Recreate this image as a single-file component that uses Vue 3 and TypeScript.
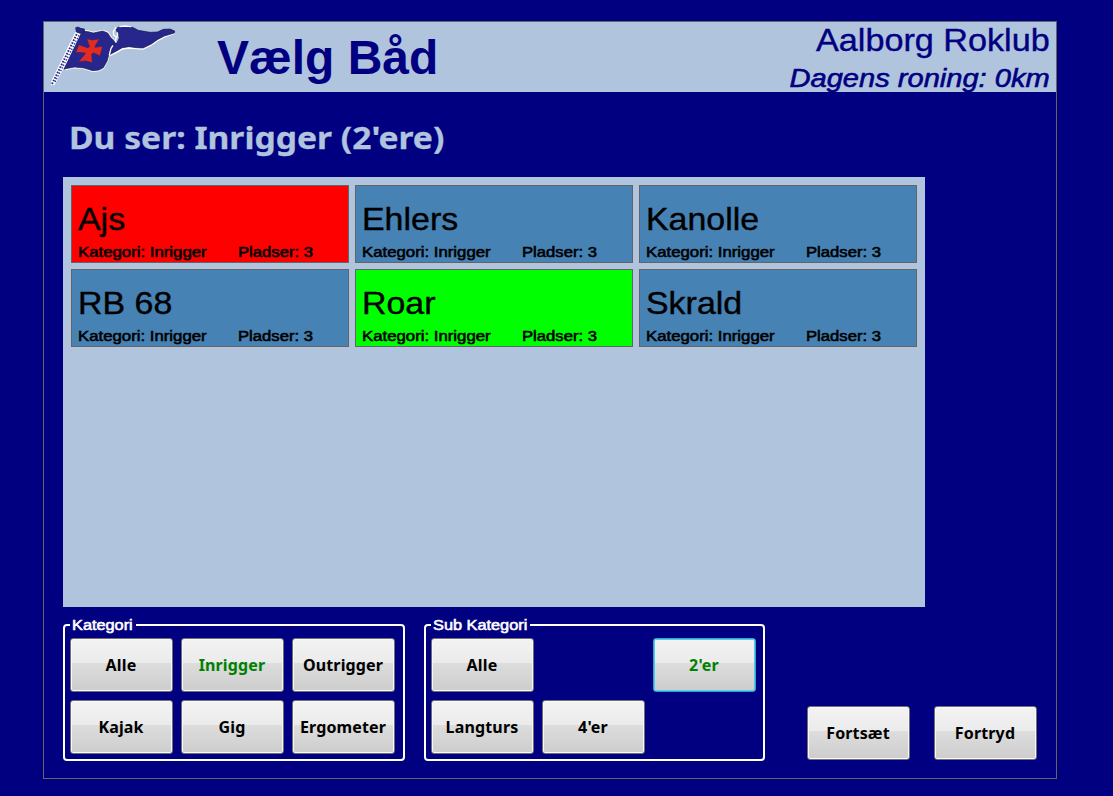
<script setup lang="ts">
interface Boat {
  name: string
  state: 'free' | 'damaged' | 'selected'
}

interface Choice {
  label: string
  active?: boolean
  focused?: boolean
}

const boats: Boat[] = [
  { name: 'Ajs', state: 'damaged' },
  { name: 'Ehlers', state: 'free' },
  { name: 'Kanolle', state: 'free' },
  { name: 'RB 68', state: 'free' },
  { name: 'Roar', state: 'selected' },
  { name: 'Skrald', state: 'free' },
]

const categories: Choice[] = [
  { label: 'Alle' },
  { label: 'Inrigger', active: true },
  { label: 'Outrigger' },
  { label: 'Kajak' },
  { label: 'Gig' },
  { label: 'Ergometer' },
]

// null leaves an empty cell in the grid
const subCategories: (Choice | null)[] = [
  { label: 'Alle' },
  null,
  { label: "2'er", active: true, focused: true },
  { label: 'Langturs' },
  { label: "4'er" },
]
</script>

<template>
  <div class="screen">
    <main class="frame">
      <header class="header">
        <svg class="logo" viewBox="12 21 423 210" aria-hidden="true">
          <path class="flag-edge" d="M124 56 L132 48 L145 49 L160 53 L188 47 L203 53 L213 68 L227 81 L222 98 L207 117 L201 139 L190 158 L177 166 L158 168 L132 160 L104 157 L76 163" />
          <path class="cloth" d="M120 58 L131 49 L145 50 L160 54 L188 48 L203 54 L213 69 L227 81 L222 98 L207 117 L201 139 L190 158 L177 165 L158 167 L132 159 L104 156 L72 162 Z" />
          <path d="M33 211 L33 200 L106 51 L122 56 L80 143 L44 209 Z" fill="#fff" />
          <path d="M36 207 L112 54" stroke="#2a2a90" stroke-width="6" stroke-dasharray="5 4" />
          <path d="M43 205 L119 57" stroke="#2a2a90" stroke-width="4" stroke-dasharray="4 5" stroke-dashoffset="4" />
          <path d="M107 38 L114 36 L122 40 L133 42 L134 50 L120 55 L109 51 Z" fill="#26268c" stroke="#181848" stroke-width="2" />
          <path class="flag-edge" d="M208 121 L228 112 L247 101 L267 98 L290 100 L309 101 L334 89 L352 76 L373 65 L403 54" />
          <path class="cloth" d="M228 43 L235 36 L252 34 L269 34 L282 39 L295 46 L330 52 L352 51 L370 43 L390 42 L404 48 L403 54 L373 63 L352 74 L334 87 L309 99 L290 98 L267 95 L247 98 L228 109 L209 119 L214 98 L234 77 L238 68 L232 53 Z" />
          <path d="M228 37 L220 50 L221 60 L229 67 L233 61 L232 52 M229 68 L225 77 L229 83 M208 120 L213 100 L219 91 M238 35 L255 33 L274 35" fill="none" stroke="#fff" stroke-width="4" />
          <path d="M140 71 L157 75 L179 71 L167 90 L165 97 L188 94 L180 123 L162 114 L155 117 L157 143 L137 138 L115 140 L133 120 L136 114 L107 112 L117 89 L142 98 L149 95 Z" fill="#e22c22" stroke="#40206c" stroke-width="2" />
        </svg>
        <h1 class="title">Vælg Båd</h1>
        <div class="club">
          <div class="club-name">Aalborg Roklub</div>
          <div class="club-day">Dagens roning: 0km</div>
        </div>
      </header>

      <h2 class="viewing">Du ser: Inrigger (2'ere)</h2>

      <section class="boats">
        <article v-for="boat in boats" :key="boat.name" class="boat" :class="boat.state">
          <div class="boat-name">{{ boat.name }}</div>
          <div class="boat-info">
            <div class="boat-category"><span class="wide">Kategori: Inrigger</span></div>
            <span class="wide">Pladser: 3</span>
          </div>
        </article>
      </section>

      <footer class="controls">
        <section class="group">
          <div class="legend first"><span class="wide">Kategori</span></div>
          <div class="buttons">
            <button v-for="c in categories" :key="c.label" class="btn" :class="{ active: c.active }">{{ c.label }}</button>
          </div>
        </section>

        <section class="group">
          <div class="legend second"><span class="wide">Sub Kategori</span></div>
          <div class="buttons">
            <template v-for="(c, i) in subCategories" :key="i">
              <button v-if="c" class="btn" :class="{ active: c.active, focused: c.focused }">{{ c.label }}</button>
              <span v-else></span>
            </template>
          </div>
        </section>

        <div class="actions">
          <button class="btn">Fortsæt</button>
          <button class="btn">Fortryd</button>
        </div>
      </footer>
    </main>
  </div>
</template>

<style>
body {
  background: #000080;
  overflow: hidden;
}
</style>

<style scoped>
* {
  box-sizing: border-box;
}
.screen {
  height: 796px;
  padding: 21px 56px 17px 43px;
  background: #000080;
  font-family: "Liberation Sans", Arial, sans-serif;
  color: #000;
}
.frame {
  height: 758px;
  border: 1px solid #646464;
}
.header {
  display: flex;
  height: 70px;
  background: #b0c4de;
  color: #000080;
}
.logo {
  width: 141px;
  height: 70px;
  flex: none;
  fill: none;
}
.cloth {
  fill: #26268c;
  stroke: #181848;
  stroke-width: 2;
}
.flag-edge {
  fill: none;
  stroke: #fff;
  stroke-width: 6;
}
.title {
  margin: 8px 0 0 32px;
  font-size: 48px;
  line-height: 56px;
  font-weight: bold;
  white-space: nowrap;
}
.club {
  margin-left: auto;
  padding-right: 6px;
  text-align: right;
  white-space: nowrap;
}
.club-name {
  font-size: 32px;
  line-height: 36px;
  -webkit-text-stroke: 0.4px;
  transform: scaleX(1.068);
  transform-origin: right;
}
.club-day {
  margin-top: 5px;
  font-size: 26px;
  line-height: 30px;
  font-style: italic;
  -webkit-text-stroke: 0.6px;
  transform: scaleX(1.118);
  transform-origin: right;
}
.viewing {
  height: 85px;
  margin: 0;
  padding: 23px 0 0 25px;
  font-family: "Noto Sans", Tahoma, sans-serif;
  font-size: 31px;
  line-height: 44px;
  font-weight: bold;
  color: #b0c4de;
  white-space: nowrap;
  -webkit-text-stroke: 0.3px;
  transform: scaleX(1.085);
  transform-origin: 25px 0;
}
.boats {
  display: grid;
  grid-template-columns: repeat(3, 278px);
  grid-auto-rows: 78px;
  gap: 6px;
  width: 862px;
  height: 430px;
  margin-left: 19px;
  padding: 8px;
  background: #b0c4de;
}
.boat {
  padding: 14px 0 0 6px;
  border: 1px solid #646464;
  background: #4682b4;
  white-space: nowrap;
}
.boat.damaged {
  background: #f00;
}
.boat.selected {
  background: #0f0;
}
.boat-name {
  font-size: 32px;
  line-height: 38px;
  -webkit-text-stroke: 0.4px;
  transform: scaleX(1.06);
  transform-origin: left;
}
.boat-info {
  display: flex;
  margin-top: 6px;
  font-size: 14px;
  line-height: 16px;
}
.boat-category {
  width: 160px;
}
.wide {
  display: inline-block;
  -webkit-text-stroke: 0.55px;
  transform: scaleX(1.19);
  transform-origin: left;
}
.boat-category .wide {
  transform: scaleX(1.198);
}
.controls {
  display: flex;
  gap: 19px;
  padding: 17px 0 0 19px;
}
.group {
  position: relative;
  width: 342px;
  height: 137px;
  padding: 12px 5px;
  border: 2px solid #fff;
  border-radius: 4px;
}
.group + .group {
  width: 341px;
}
.legend {
  position: absolute;
  top: -9px;
  left: 5px;
  padding-left: 2px;
  background: #000080;
  color: #fff;
  font-size: 14px;
  line-height: 17px;
  white-space: nowrap;
}
.legend .wide {
  transform: scaleX(1.165);
}
.legend.first {
  width: 66px;
}
.legend.second {
  width: 99px;
}
.buttons {
  display: grid;
  grid-template-columns: repeat(3, 103px);
  grid-auto-rows: 54px;
  gap: 8px;
}
.btn {
  width: 103px;
  height: 54px;
  padding: 0 1px 0 0;
  border: 1px solid #707070;
  border-radius: 3px;
  background: linear-gradient(#f3f3f3, #ebebeb 46%, #dddddd 46%, #cdcdcd);
  box-shadow: inset 0 0 0 1px #f8f8f8;
  font-family: "Noto Sans", Tahoma, sans-serif;
  font-size: 16px;
  font-weight: bold;
  letter-spacing: 0.15px;
  color: #000;
  white-space: nowrap;
}
.btn.active {
  color: #008000;
}
.btn.focused {
  border-color: #3c9fc4;
  box-shadow: inset 0 0 0 1px #48d0f4;
}
.actions {
  display: flex;
  gap: 24px;
  margin: 82px 0 0 23px;
}
</style>
